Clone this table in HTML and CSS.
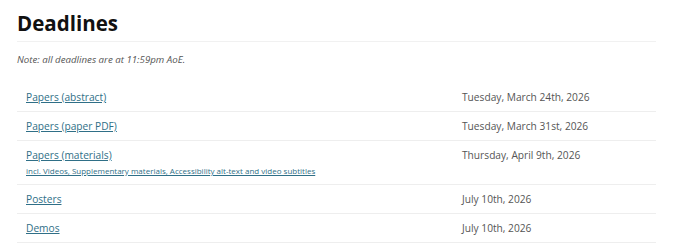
FILE: index.html
```html
<!DOCTYPE html>
<html lang="en">
<head>
<meta charset="utf-8">
<title>Deadlines</title>
<link rel="stylesheet" href="styles.css">
</head>
<body>
<main class="page">
  <h1 class="title">Deadlines</h1>
  <p class="note">Note: all deadlines are at 11:59pm AoE.</p>
  <div class="table">
    <div class="row">
      <div class="name"><a href="#">Papers (abstract)</a></div>
      <div class="date">Tuesday, March 24th, 2026</div>
    </div>
    <div class="row">
      <div class="name"><a href="#">Papers (paper PDF)</a></div>
      <div class="date">Tuesday, March 31st, 2026</div>
    </div>
    <div class="row">
      <div class="name"><a href="#">Papers (materials)</a><a class="sub" href="#">incl. Videos, Supplementary materials, Accessibility alt-text and video subtitles</a></div>
      <div class="date">Thursday, April 9th, 2026</div>
    </div>
    <div class="row">
      <div class="name"><a href="#">Posters</a></div>
      <div class="date">July 10th, 2026</div>
    </div>
    <div class="row">
      <div class="name"><a href="#">Demos</a></div>
      <div class="date">July 10th, 2026</div>
    </div>
  </div>
</main>
</body>
</html>
```
FILE: styles.css
```css
html, body {
  margin: 0;
  padding: 0;
  background: #fff;
}
body {
  font-family: "Open Sans", "Noto Sans", sans-serif;
  color: #555;
}
.page {
  padding: 10px 24px 0 17px;
}
.title {
  margin: 0;
  padding-bottom: 4px;
  font-size: 20.5px;
  line-height: 27px;
  font-weight: 700;
  color: #111;
  border-bottom: 1px solid #f1f1f1;
}
.note {
  margin: 10px 0 15px;
  font-size: 9.7px;
  line-height: 16px;
  font-style: italic;
  color: #555;
}
.table {
  display: flex;
  flex-direction: column;
}
.row {
  display: grid;
  grid-template-columns: 436px 1fr;
  border-bottom: 1px solid #eee;
}
.name, .date {
  padding: 6px 9px;
  font-size: 10.2px;
  line-height: 16px;
}
.date {
  color: #555;
}
a {
  color: #2f6f87;
  text-decoration: underline;
}
.sub {
  display: block;
  width: max-content;
  font-size: 8px;
  line-height: 15px;
}
```
